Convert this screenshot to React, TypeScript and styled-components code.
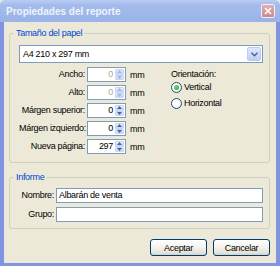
import React from 'react';
import styled, { createGlobalStyle } from 'styled-components';

const GlobalStyle = createGlobalStyle`
  html, body { margin: 0; padding: 0; background: #ece9d8; }
  * { box-sizing: border-box; }
`;

const Window = styled.div`
  width: 280px;
  height: 266px;
  display: flex;
  flex-direction: column;
  font-family: "Liberation Sans", Arial, sans-serif;
  font-size: 9px;
  letter-spacing: -0.3px;
  color: #000;
`;

const TitleBar = styled.div`
  height: 22px;
  flex: none;
  display: flex;
  align-items: center;
  justify-content: space-between;
  padding: 0 5px 0 6px;
  background: linear-gradient(to bottom, #b9ccf3 0%, #a3bbec 25%, #9ab3e8 100%);
  border-radius: 5px 5px 0 0;
`;

const Title = styled.span`
  font-size: 10px;
  font-weight: bold;
  color: #eef3fc;
  letter-spacing: 0;
`;

const CloseButton = styled.div`
  width: 14px;
  height: 14px;
  border: 1px solid #eef0f8;
  border-radius: 2px;
  background: linear-gradient(to bottom, #e2aeb0, #c98a8e);
  display: flex;
  align-items: center;
  justify-content: center;
`;

const Client = styled.div`
  flex: 1;
  display: flex;
  flex-direction: column;
  background: #ece9d8;
  border-left: 4px solid #8094e0;
  border-right: 4px solid #8094e0;
  border-bottom: 3px solid #8094e0;
  padding: 6px 6px 6px 5px;
`;

const Group = styled.fieldset<{ $gap?: number }>`
  margin: ${(p) => p.$gap ?? 0}px 0 0 0;
  padding: 0;
  border: 1px solid #d0d0bf;
  border-radius: 3px;
  min-width: 0;
`;

const Legend = styled.legend`
  margin-left: 4px;
  padding: 0 2px;
  color: #0046d5;
  font-size: 9px;
  line-height: 11px;
`;

const GroupBody = styled.div<{ $pad: string }>`
  padding: ${(p) => p.$pad};
  display: flex;
  flex-direction: column;
`;

const Select = styled.div`
  height: 18px;
  border: 1px solid #7f9db9;
  background: #fff;
  display: flex;
  align-items: center;
  padding: 1px;
`;

const SelectText = styled.span`
  flex: 1;
  padding-left: 2px;
`;

const DropButton = styled.div`
  width: 14px;
  height: 100%;
  border: 1px solid #b9cdf6;
  border-radius: 2px;
  background: linear-gradient(to bottom, #dde8fd, #bccff6);
  display: flex;
  align-items: center;
  justify-content: center;
`;

const FieldArea = styled.div`
  margin-top: 4px;
  display: grid;
  grid-template-columns: 152px 1fr;
`;

const FieldGrid = styled.div`
  display: grid;
  grid-template-columns: 66px 39px auto;
  column-gap: 2px;
  row-gap: 3px;
  align-items: center;
`;

const Label = styled.span`
  text-align: right;
  white-space: nowrap;
  line-height: 15px;
`;

const SpinBox = styled.div`
  height: 15px;
  border: 1px solid #7f9db9;
  background: #fff;
  display: flex;
  align-items: stretch;
`;

const SpinValue = styled.span<{ $disabled?: boolean }>`
  flex: 1;
  text-align: right;
  padding-right: 2px;
  line-height: 13px;
  color: ${(p) => (p.$disabled ? '#aca899' : '#000')};
`;

const SpinButtons = styled.div`
  width: 10px;
  display: flex;
  flex-direction: column;
  padding: 1px 1px 1px 0;
`;

const SpinHalf = styled.div`
  flex: 1;
  border: 1px solid #c7d6f6;
  border-radius: 1px;
  background: linear-gradient(to bottom, #e4ecfd, #c6d6f7);
  display: flex;
  align-items: center;
  justify-content: center;
`;

const Unit = styled.span`
  padding-left: 2px;
`;

const Orientation = styled.div`
  display: flex;
  flex-direction: column;
`;

const OrientationTitle = styled.span`
  line-height: 15px;
  height: 12px;
`;

const RadioRow = styled.div`
  height: 16px;
  display: flex;
  align-items: center;
  gap: 2px;
`;

const RadioCircle = styled.span<{ $checked?: boolean }>`
  width: 11px;
  height: 11px;
  border-radius: 50%;
  border: 1px solid #1c5180;
  background: radial-gradient(circle at 40% 40%, #ffffff 40%, #dcdad0 100%);
  display: flex;
  align-items: center;
  justify-content: center;
  &::after {
    content: '';
    width: 5px;
    height: 5px;
    border-radius: 50%;
    background: ${(p) => (p.$checked ? 'radial-gradient(circle at 40% 40%, #6fdc6f, #21a121)' : 'transparent')};
  }
`;

const InfoGrid = styled.div`
  display: grid;
  grid-template-columns: 44px 1fr;
  column-gap: 2px;
  row-gap: 4px;
  align-items: center;
`;

const TextInput = styled.div`
  height: 15px;
  border: 1px solid #7f9db9;
  background: #fff;
  padding-left: 2px;
  line-height: 13px;
`;

const ButtonRow = styled.div`
  margin-top: 10px;
  display: flex;
  justify-content: flex-end;
  gap: 6px;
`;

const Button = styled.div`
  width: 57px;
  height: 17px;
  border: 1px solid #003c74;
  border-radius: 3px;
  background: linear-gradient(to bottom, #ffffff 0%, #f3f2ec 50%, #e6e3d6 85%, #d6d0c2 100%);
  display: flex;
  align-items: center;
  justify-content: center;
`;

const Chevron = ({ color = '#4d6185' }: { color?: string }) => (
  <svg width="7" height="5" viewBox="0 0 7 5">
    <path d="M0.5 0.8 L3.5 3.8 L6.5 0.8" fill="none" stroke={color} strokeWidth="1.4" />
  </svg>
);

const Arrow = ({ up, color }: { up?: boolean; color: string }) => (
  <svg width="5" height="3" viewBox="0 0 5 3">
    <path d={up ? 'M0 3 L2.5 0 L5 3 Z' : 'M0 0 L2.5 3 L5 0 Z'} fill={color} />
  </svg>
);

const Spin = ({ value, disabled }: { value: string; disabled?: boolean }) => {
  const c = disabled ? '#a9b7d6' : '#4d6185';
  return (
    <SpinBox>
      <SpinValue $disabled={disabled}>{value}</SpinValue>
      <SpinButtons>
        <SpinHalf>
          <Arrow up color={c} />
        </SpinHalf>
        <SpinHalf>
          <Arrow color={c} />
        </SpinHalf>
      </SpinButtons>
    </SpinBox>
  );
};

const rows = [
  { label: 'Ancho:', value: '0', disabled: true },
  { label: 'Alto:', value: '0', disabled: true },
  { label: 'Márgen superior:', value: '0' },
  { label: 'Márgen izquierdo:', value: '0' },
  { label: 'Nueva página:', value: '297' },
];

export default function App() {
  return (
    <Window>
      <GlobalStyle />
      <TitleBar>
        <Title>Propiedades del reporte</Title>
        <CloseButton>
          <svg width="8" height="8" viewBox="0 0 8 8">
            <path d="M1 1 L7 7 M7 1 L1 7" stroke="#fff" strokeWidth="1.6" />
          </svg>
        </CloseButton>
      </TitleBar>
      <Client>
        <Group>
          <Legend>Tamaño del papel</Legend>
          <GroupBody $pad="6px 6px 8px 9px">
            <Select>
              <SelectText>A4 210 x 297 mm</SelectText>
              <DropButton>
                <Chevron />
              </DropButton>
            </Select>
            <FieldArea>
              <FieldGrid>
                {rows.map((r) => (
                  <React.Fragment key={r.label}>
                    <Label>{r.label}</Label>
                    <Spin value={r.value} disabled={r.disabled} />
                    <Unit>mm</Unit>
                  </React.Fragment>
                ))}
              </FieldGrid>
              <Orientation>
                <OrientationTitle>Orientación:</OrientationTitle>
                <RadioRow>
                  <RadioCircle $checked />
                  <span>Vertical</span>
                </RadioRow>
                <RadioRow>
                  <RadioCircle />
                  <span>Horizontal</span>
                </RadioRow>
              </Orientation>
            </FieldArea>
          </GroupBody>
        </Group>
        <Group $gap={9}>
          <Legend>Informe</Legend>
          <GroupBody $pad="5px 6px 6px 0">
            <InfoGrid>
              <Label>Nombre:</Label>
              <TextInput>Albarán de venta</TextInput>
              <Label>Grupo:</Label>
              <TextInput />
            </InfoGrid>
          </GroupBody>
        </Group>
        <ButtonRow>
          <Button>Aceptar</Button>
          <Button>Cancelar</Button>
        </ButtonRow>
      </Client>
    </Window>
  );
}
